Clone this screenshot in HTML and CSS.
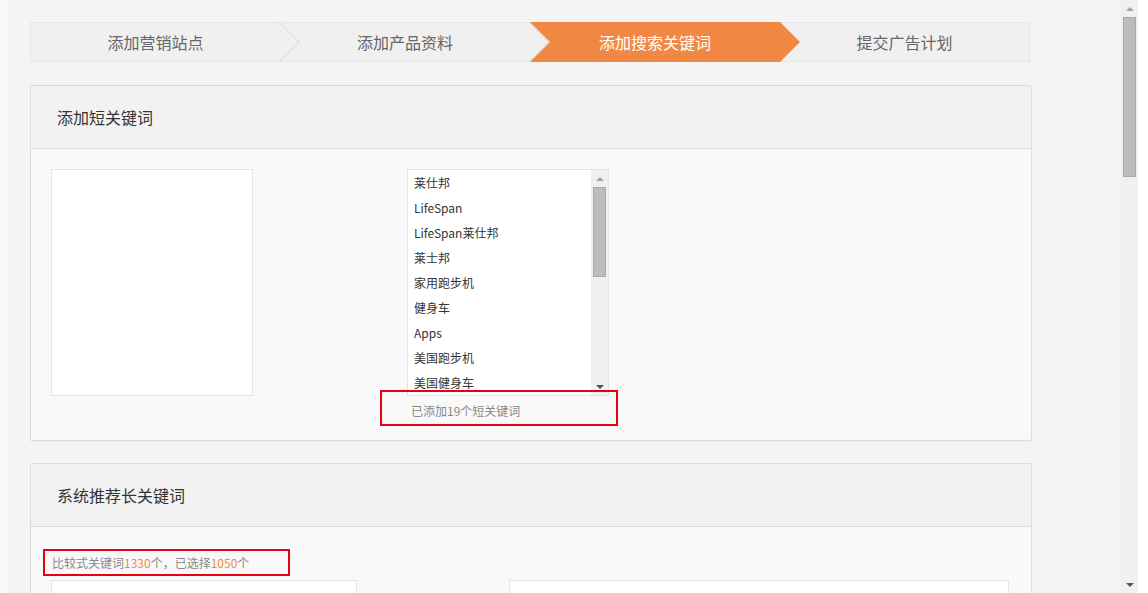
FILE: index.html
```html
<!DOCTYPE html>
<html lang="zh-CN">
<head>
<meta charset="utf-8">
<title>添加搜索关键词</title>
<link rel="stylesheet" href="styles.css">
</head>
<body>
<div class="page">
  <div class="steps">
    <div class="step first"><span class="step-text">添加营销站点</span></div>
    <div class="step"><span class="step-text">添加产品资料</span></div>
    <div class="step active"><span class="step-text">添加搜索关键词</span></div>
    <div class="step last"><span class="step-text">提交广告计划</span></div>
  </div>

  <div class="card">
    <div class="card-head">添加短关键词</div>
    <div class="card-body body-short">
      <div class="pick-row">
        <div class="box box-src"></div>
        <div class="list-col">
          <div class="listbox">
            <ul class="items">
              <li>莱仕邦</li>
              <li>LifeSpan</li>
              <li>LifeSpan莱仕邦</li>
              <li>莱士邦</li>
              <li>家用跑步机</li>
              <li>健身车</li>
              <li>Apps</li>
              <li>美国跑步机</li>
              <li>美国健身车</li>
            </ul>
            <div class="vscroll">
              <span class="arrow-cell"><span class="arrow up"></span></span>
              <span class="thumb thumb-list"></span>
              <span class="spacer"></span>
              <span class="arrow-cell"><span class="arrow down"></span></span>
            </div>
          </div>
          <div class="note"><span class="mark mark-a">已添加19个短关键词</span></div>
        </div>
      </div>
    </div>
  </div>

  <div class="card">
    <div class="card-head">系统推荐长关键词</div>
    <div class="card-body body-long">
      <div class="stat"><span class="mark mark-b">比较式关键词<em>1330</em>个，已选择<em>1050</em>个</span></div>
      <div class="long-row">
        <div class="box box-l"></div>
        <div class="box box-r"></div>
      </div>
    </div>
  </div>
</div>
<div class="scrollbar">
  <span class="arrow-cell"><span class="arrow up"></span></span>
  <span class="thumb thumb-page"></span>
  <span class="spacer"></span>
  <span class="arrow-cell"><span class="arrow down"></span></span>
</div>
<div class="edge"></div>
</body>
</html>
```

FILE: styles.css
```css
html {
  background: #f9f9f9;
}
body {
  margin: 0;
  padding-left: 8px;
  height: 593px;
  overflow: hidden;
  display: flex;
  font-family: "Noto Sans CJK SC", "Microsoft YaHei", sans-serif;
  background: #f9f9f9;
}
.page {
  flex: 1;
  min-width: 0;
  background: #f4f4f4;
  padding: 22px 0 0 22px;
  overflow: hidden;
}

/* steps */
.steps {
  width: 1000px;
  height: 40px;
  box-sizing: border-box;
  border: 1px solid #e6e6e6;
  background: #f0f0f0;
  display: flex;
  margin-bottom: 23px;
}
.step {
  position: relative;
  flex: 0 0 250px;
  line-height: 38px;
  text-align: center;
  font-size: 16px;
  color: #666;
}
.step.first {
  flex-basis: 249px;
}
.step.last {
  flex: 1;
}
.step-text {
  position: relative;
  z-index: 3;
}
.step::after {
  content: "";
  position: absolute;
  top: 50%;
  right: -14px;
  width: 28px;
  height: 28px;
  margin-top: -14px;
  box-sizing: border-box;
  border-top: 1px solid #dcdcdc;
  border-right: 1px solid #dcdcdc;
  transform: rotate(45deg);
  z-index: 1;
}
.step.last::after,
.step.active::after {
  display: none;
}
.step.active {
  color: #fff;
}
.step.active::before {
  content: "";
  position: absolute;
  top: -1px;
  bottom: -1px;
  left: 0;
  width: 270px;
  background: #f08843;
  clip-path: polygon(0 0, 250px 0, 270px 50%, 250px 100%, 0 100%, 20px 50%);
  z-index: 2;
}

/* cards */
.card {
  width: 1002px;
  box-sizing: border-box;
  border: 1px solid #dcdcdc;
  border-radius: 2px;
  background: #f9f9f9;
  margin-bottom: 22px;
  box-shadow: 0 1px 1px rgba(0, 0, 0, 0.03);
}
.card-head {
  height: 62px;
  line-height: 62px;
  padding-left: 26px;
  background: #f2f2f2;
  border-bottom: 1px solid #dcdcdc;
  font-size: 16px;
  color: #333;
}
.card-body {
  padding: 20px 20px 14px 20px;
}
.pick-row {
  display: flex;
  gap: 154px;
}
.box {
  background: #fff;
  border: 1px solid #e5e5e5;
  box-sizing: border-box;
}
.box-src {
  width: 202px;
  height: 227px;
}
.list-col {
  display: flex;
  flex-direction: column;
}
.listbox {
  display: flex;
  width: 202px;
  height: 227px;
  box-sizing: border-box;
  border: 1px solid #e3e3e3;
  background: #fff;
}
.items {
  flex: 1;
  margin: 0;
  padding: 0 0 0 6px;
  list-style: none;
  overflow: hidden;
  font-size: 12px;
  line-height: 25px;
  color: #333;
}
.items li {
  white-space: nowrap;
}

/* scrollbars */
.vscroll,
.scrollbar {
  width: 17px;
  background: #f0f0f0;
  display: flex;
  flex-direction: column;
  align-items: center;
  flex-shrink: 0;
}
.scrollbar {
  height: 593px;
}
.arrow-cell {
  height: 17px;
  width: 17px;
  display: flex;
  align-items: center;
  justify-content: center;
  flex-shrink: 0;
}
.arrow {
  width: 0;
  height: 0;
  border-left: 4px solid transparent;
  border-right: 4px solid transparent;
}
.arrow.up {
  border-bottom: 4px solid #a3a3a3;
}
.arrow.down {
  border-top: 4px solid #555;
}
.thumb {
  width: 13px;
  box-sizing: border-box;
  background: #bcbcbc;
  border: 1px solid #a9a9a9;
  flex-shrink: 0;
}
.thumb-list {
  height: 90px;
}
.thumb-page {
  height: 160px;
}
.spacer {
  flex: 1;
}
.edge {
  width: 10px;
  flex-shrink: 0;
  background: #fff;
}

/* notes with red annotation frames */
.note {
  padding-left: 4px;
  line-height: 30px;
  font-size: 12px;
  color: #888;
}
.mark {
  position: relative;
  display: inline-block;
}
.mark::after {
  content: "";
  position: absolute;
  border: 2px solid #e60012;
  pointer-events: none;
}
.mark-a::after {
  left: -31px;
  right: -98px;
  top: -6px;
  bottom: 0;
}
.body-long {
  padding: 26px 20px 0 20px;
}
.stat {
  padding-left: 1px;
  line-height: 20px;
  font-size: 12px;
  color: #888;
  margin-bottom: 7px;
}
.stat em {
  font-style: normal;
  color: #f08843;
}
.mark-b::after {
  left: -9px;
  right: -41px;
  top: -4px;
  bottom: -3px;
}
.long-row {
  display: flex;
  gap: 152px;
}
.box-l {
  width: 306px;
  height: 200px;
}
.box-r {
  width: 500px;
  height: 200px;
}
```
